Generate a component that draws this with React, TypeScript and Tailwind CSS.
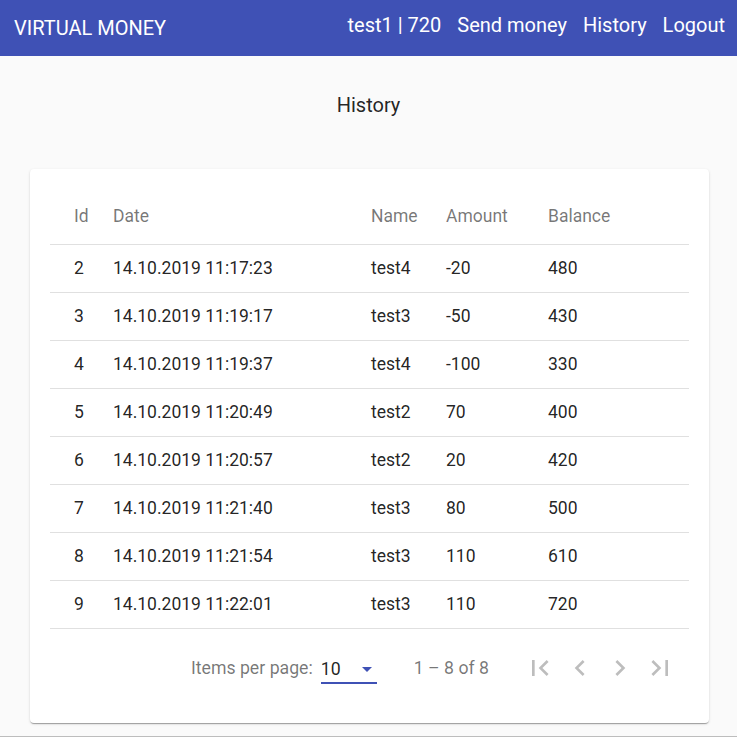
const rows = [
  { id: 2, date: '14.10.2019 11:17:23', name: 'test4', amount: -20, balance: 480 },
  { id: 3, date: '14.10.2019 11:19:17', name: 'test3', amount: -50, balance: 430 },
  { id: 4, date: '14.10.2019 11:19:37', name: 'test4', amount: -100, balance: 330 },
  { id: 5, date: '14.10.2019 11:20:49', name: 'test2', amount: 70, balance: 400 },
  { id: 6, date: '14.10.2019 11:20:57', name: 'test2', amount: 20, balance: 420 },
  { id: 7, date: '14.10.2019 11:21:40', name: 'test3', amount: 80, balance: 500 },
  { id: 8, date: '14.10.2019 11:21:54', name: 'test3', amount: 110, balance: 610 },
  { id: 9, date: '14.10.2019 11:22:01', name: 'test3', amount: 110, balance: 720 },
];

const cols = 'grid grid-cols-[63px_258px_75px_102px_1fr]';

// material paginator icons
const icons = [
  'M18.41 16.59L13.82 12l4.59-4.59L17 6l-6 6 6 6zM6 6h2v12H6z',
  'M15.41 7.41L14 6l-6 6 6 6 1.41-1.41L10.83 12z',
  'M10 6L8.59 7.41 13.17 12l-4.58 4.59L10 18l6-6z',
  'M5.59 7.41L10.18 12l-4.59 4.59L7 18l6-6-6-6zM16 6h2v12h-2z',
];

export default function App() {
  return (
    <div className="h-[737px] flex flex-col bg-[#fafafa] font-['Roboto',sans-serif] overflow-hidden">
      {/* Toolbar */}
      <header className="h-14 shrink-0 bg-[#3f51b5] text-white flex items-center justify-between pl-[14px] pr-3">
        <span className="text-[20px]">VIRTUAL MONEY</span>
        <nav className="flex items-center gap-4 text-[20px] mb-[6px]">
          <span>test1 | 720</span>
          <span>Send money</span>
          <span>History</span>
          <span>Logout</span>
        </nav>
      </header>

      <h1 className="text-center text-[20px] text-black/[0.87] mt-[37px] leading-6">History</h1>

      {/* Card */}
      <div className="ml-[30px] mr-[28px] mt-[52px] bg-white rounded shadow-[0_2px_1px_-1px_rgba(0,0,0,0.2),0_1px_1px_0_rgba(0,0,0,0.14),0_1px_3px_0_rgba(0,0,0,0.12)] px-5 pt-5 pb-4">
        <div className={`${cols} h-14 items-center border-b border-black/[0.12] text-[17.5px] text-black/[0.54]`}>
          <span className="pl-6">Id</span>
          <span>Date</span>
          <span>Name</span>
          <span>Amount</span>
          <span>Balance</span>
        </div>
        {rows.map((r) => (
          <div key={r.id} className={`${cols} h-12 items-center border-b border-black/[0.12] text-[17.5px] text-black/[0.87]`}>
            <span className="pl-6">{r.id}</span>
            <span>{r.date}</span>
            <span>{r.name}</span>
            <span>{r.amount}</span>
            <span>{r.balance}</span>
          </div>
        ))}

        {/* Paginator */}
        <div className="h-[78px] flex items-center justify-end text-[17.7px] text-black/[0.54] pr-[13px]">
          <span>Items per page:</span>
          <div className="ml-2 w-14 h-8 flex items-center justify-between border-b-2 border-[#3f51b5] pt-1 text-black/[0.87]">
            <span>10</span>
            <span className="w-0 h-0 border-l-[5px] border-r-[5px] border-t-[5px] border-l-transparent border-r-transparent border-t-[#3f51b5] mr-[5px]" />
          </div>
          <span className="ml-[37px] mr-[35px]">1 – 8 of 8</span>
          <div className="flex items-center gap-2 text-black/[0.26]">
            {icons.map((d) => (
              <svg key={d} width="32" height="32" viewBox="0 0 24 24" fill="currentColor">
                <path d={d} />
              </svg>
            ))}
          </div>
        </div>
      </div>

      <div className="flex-1" />
      <div className="h-px bg-[#bdbdbd]" />
    </div>
  );
}
